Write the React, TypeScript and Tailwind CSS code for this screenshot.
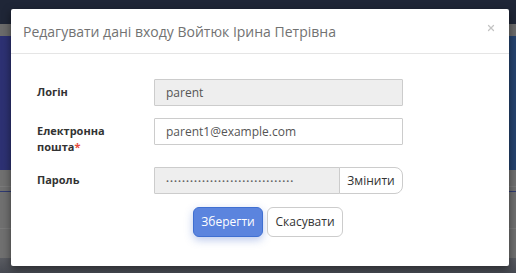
import { X } from 'lucide-react';

const font = { fontFamily: '"Open Sans", "Noto Sans", sans-serif' };

function Backdrop() {
    return (
        <div className="flex h-[273px] w-[516px] flex-col">
            <div className="h-[24px] bg-[#1f2637]" />
            <div className="h-[12px] bg-[#6b6b6b]" />
            <div className="h-[134px] bg-gradient-to-r from-[#2d3173] to-[#25446f]" />
            <div className="flex h-[88px] flex-col bg-[#707070]">
                <div className="mt-[16px] h-px bg-[#7a7a7a]" />
                <div className="mt-[4px] h-[1px] bg-[#2f3a72]" />
                <div className="mt-[36px] h-px bg-[#7a7a7a]" />
            </div>
            <div className="flex-1 bg-gradient-to-b from-[#5a5c62] to-[#474a52]" />
        </div>
    );
}

export default function App() {
    return (
        <div className="relative h-[273px] w-[516px] overflow-hidden" style={font}>
            <Backdrop />
            <div className="absolute left-[11px] top-[9px] flex h-[257px] w-[498px] flex-col rounded-[2px] bg-white shadow-[0_3px_9px_rgba(0,0,0,0.5)]">
                <div className="flex h-[45px] items-center justify-between border-b border-[#e5e5e5] pl-[12px] pr-[13px]">
                    <h4 className="text-[14px] text-[#727272]">Редагувати дані входу Войтюк Ірина Петрівна</h4>
                    <X className="mb-[6px] h-[10px] w-[10px] text-[#c4c4c4]" strokeWidth={3} />
                </div>
                <div className="flex flex-col pl-[26px] pt-[25px]">
                    <div className="flex items-center">
                        <label className="w-[117px] text-[11px] font-bold text-[#333]">Логін</label>
                        <div className="flex h-[27px] w-[249px] items-center rounded-[1px] border border-[#ccc] bg-[#eee] px-[11px] text-[12px] text-[#555]">
                            parent
                        </div>
                    </div>
                    <div className="mt-[12px] flex items-start">
                        <label className="mt-[5px] w-[117px] text-[11px] leading-[16px] font-bold text-[#333]">
                            Електронна
                            <br />
                            пошта<span className="text-[#e74c3c]">*</span>
                        </label>
                        <div className="flex h-[27px] w-[249px] items-center rounded-[1px] border border-[#ccc] bg-white px-[11px] text-[12px] text-[#555]">
                            parent1@example.com
                        </div>
                    </div>
                    <div className="mt-[12px] flex items-center">
                        <label className="w-[117px] text-[11px] font-bold text-[#333]">Пароль</label>
                        <div className="flex h-[27px] w-[249px]">
                            <div className="flex flex-1 items-center overflow-hidden rounded-l-[1px] border border-[#ccc] bg-[#eee] px-[11px] text-[8px] tracking-[1px] text-[#666]">
                                ••••••••••••••••••••••••••••••••
                            </div>
                            <button className="-ml-px h-full w-[64px] rounded-r-[8px] border border-[#ccc] bg-white text-[12px] text-[#333]">
                                Змінити
                            </button>
                        </div>
                    </div>
                    <div className="mt-[13px] flex gap-[4px] pl-[156px]">
                        <button className="h-[30px] w-[70px] rounded-[6px] border border-[#3f6fd1] bg-[#5b84de] text-[12px] text-white shadow-[0_3px_8px_rgba(60,100,200,0.35)]">
                            Зберегти
                        </button>
                        <button className="h-[30px] w-[76px] rounded-[6px] border border-[#ccc] bg-white text-[12px] text-[#333]">
                            Скасувати
                        </button>
                    </div>
                </div>
            </div>
        </div>
    );
}
